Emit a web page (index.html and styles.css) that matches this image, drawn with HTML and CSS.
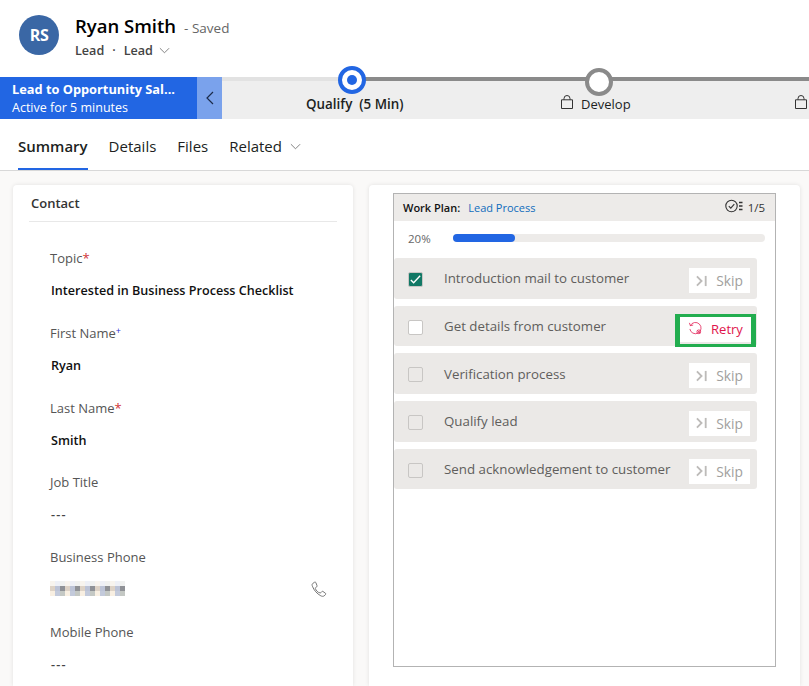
FILE: index.html
```html
<!DOCTYPE html>
<html>
<head>
	<title>Ryan Smith - Saved</title>
	<meta charset="UTF-8">
	<link rel="stylesheet" href="styles.css">
</head>
<body>
	<header class="record-head">
		<div class="avatar">RS</div>
		<div class="record-title">
			<div class="name-row"><span class="name">Ryan Smith</span><span class="saved">- Saved</span></div>
			<div class="type-row">
				<span>Lead</span><span class="dot">·</span><span>Lead</span>
				<svg class="chev" viewBox="0 0 12 12"><path d="M1 3.5l5 5 5-5"/></svg>
			</div>
		</div>
	</header>

	<section class="process">
		<div class="process-flag">
			<div class="flag-title">Lead to Opportunity Sal...</div>
			<div class="flag-sub">Active for 5 minutes</div>
		</div>
		<div class="process-toggle">
			<svg viewBox="0 0 10 14"><path d="M8 1L2 7l6 6"/></svg>
		</div>
		<div class="stages">
			<div class="stage-line"></div>
			<span class="stage-dot active"></span>
			<span class="stage-dot next"></span>
			<div class="stage stage-qualify"><b>Qualify</b>&nbsp; <b>(5 Min)</b></div>
			<div class="stage stage-develop">
				<svg class="lock" viewBox="0 0 12 14"><path d="M.5 4.800h11v8.700H.5zM3 4.800V3.500a3 3 0 0 1 6 0v1.300"/></svg>
				<span>Develop</span>
			</div>
			<div class="stage stage-last">
				<svg class="lock" viewBox="0 0 12 14"><path d="M.5 4.800h11v8.700H.5zM3 4.800V3.500a3 3 0 0 1 6 0v1.300"/></svg>
			</div>
		</div>
	</section>

	<nav class="tabs">
		<a class="tab current">Summary</a>
		<a class="tab">Details</a>
		<a class="tab">Files</a>
		<a class="tab">Related
			<svg class="chev" viewBox="0 0 12 12"><path d="M1 3.500l5 5 5-5"/></svg>
		</a>
	</nav>

	<main class="content">
		<section class="card contact">
			<h2 class="card-title">Contact</h2>
			<div class="field">
				<div class="field-label">Topic<span class="req">*</span></div>
				<div class="field-value">Interested in Business Process Checklist</div>
			</div>
			<div class="field">
				<div class="field-label">First Name<span class="rec">+</span></div>
				<div class="field-value">Ryan</div>
			</div>
			<div class="field">
				<div class="field-label">Last Name<span class="req">*</span></div>
				<div class="field-value">Smith</div>
			</div>
			<div class="field">
				<div class="field-label">Job Title</div>
				<div class="field-value empty">---</div>
			</div>
			<div class="field">
				<div class="field-label">Business Phone</div>
				<div class="field-value phone">
					<svg class="mosaic" viewBox="0 0 15 3" shape-rendering="crispEdges">
						<defs>
							<pattern id="blur" width="3" height="3" patternUnits="userSpaceOnUse">
								<rect x="0" y="0" width="1" height="1" fill="#f8f4ee"/>
								<rect x="1" y="0" width="1" height="1" fill="#eef0f6"/>
								<rect x="2" y="0" width="1" height="1" fill="#f0f1f0"/>
								<rect x="0" y="1" width="1" height="1" fill="#ddd2c6"/>
								<rect x="1" y="1" width="1" height="1" fill="#bcc3d6"/>
								<rect x="2" y="1" width="1" height="1" fill="#8f9196"/>
								<rect x="0" y="2" width="1" height="1" fill="#f8efe2"/>
								<rect x="1" y="2" width="1" height="1" fill="#c3cadb"/>
								<rect x="2" y="2" width="1" height="1" fill="#c4c8c4"/>
							</pattern>
						</defs>
						<rect width="15" height="3" fill="url(#blur)"/>
					</svg>
					<svg class="phone-icon" viewBox="0 0 16 16"><path d="M3.600 1.200L1.600 2.600C.9 3.200 1 4.200 1.400 5.200c1.600 4.200 4.600 7.600 8.400 9.600 1.200.6 2.400.8 3.300.1l1.400-1.300c.4-.4.4-1 0-1.300l-2.500-1.800c-.4-.3-.9-.2-1.200.1l-.8 1c-.3.3-.7.4-1.100.2C6.700 11.600 5 9.400 4.300 7.500c-.1-.4 0-.8.4-1l1-.7c.4-.3.5-.8.3-1.200L4.800 1.500c-.3-.5-.8-.6-1.200-.3z"/></svg>
				</div>
			</div>
			<div class="field">
				<div class="field-label">Mobile Phone</div>
				<div class="field-value empty">---</div>
			</div>
		</section>

		<section class="card plan-card">
			<div class="plan">
				<div class="plan-head">
					<span class="plan-name">Work Plan:</span>
					<a class="plan-link">Lead Process</a>
					<span class="plan-count">
						<svg viewBox="0 0 18 14"><circle cx="6.500" cy="7" r="5.700"/><path d="M3.800 7.200l2 2 3.500-4"/><path class="ticks" d="M14 3.500h3.500M14 7h3.500M14 10.500h3.500"/></svg>
						1/5
					</span>
				</div>
				<div class="plan-progress">
					<span class="pct">20%</span>
					<div class="track"><div class="fill" style="width:20%"></div></div>
				</div>
				<div class="tasks">
					<div class="task">
						<span class="check done"><svg viewBox="0 0 14 14"><path d="M2 7.500l3 3 7-7.500"/></svg></span>
						<span class="task-name">Introduction mail to customer</span>
						<button class="action skip"><svg viewBox="0 0 13 12"><path d="M1 1l5 5-5 5"/><path d="M10.500 .5v11"/></svg>Skip</button>
					</div>
					<div class="task">
						<span class="check open"></span>
						<span class="task-name">Get details from customer</span>
						<button class="action retry"><svg viewBox="0 0 16 16"><path d="M2.500 5A6 6 0 1 1 2 8.500M1.500 2l1 3 3-.7"/><circle cx="11.500" cy="11.500" r="2"/><path d="M10 10l3 3"/></svg>Retry</button>
					</div>
					<div class="task">
						<span class="check"></span>
						<span class="task-name">Verification process</span>
						<button class="action skip"><svg viewBox="0 0 13 12"><path d="M1 1l5 5-5 5"/><path d="M10.500 .5v11"/></svg>Skip</button>
					</div>
					<div class="task">
						<span class="check"></span>
						<span class="task-name">Qualify lead</span>
						<button class="action skip"><svg viewBox="0 0 13 12"><path d="M1 1l5 5-5 5"/><path d="M10.500 .5v11"/></svg>Skip</button>
					</div>
					<div class="task">
						<span class="check"></span>
						<span class="task-name">Send acknowledgement to customer</span>
						<button class="action skip"><svg viewBox="0 0 13 12"><path d="M1 1l5 5-5 5"/><path d="M10.500 .5v11"/></svg>Skip</button>
					</div>
				</div>
			</div>
		</section>
	</main>
</body>
</html>
```

FILE: styles.css
```css
html, body {
	height: 100%;
}
body {
	margin: 0;
	height: 686px;
	overflow: hidden;
	display: flex;
	flex-direction: column;
	background-color: #fff;
	color: #201f1e;
	font-family: "Open Sans", "Noto Sans", sans-serif;
	font-size: 13px;
}
svg {
	display: block;
	fill: none;
	stroke: currentColor;
}

/* record header */
.record-head {
	height: 77px;
	box-sizing: border-box;
	padding: 15px 0 0 19px;
	display: flex;
	gap: 16px;
}
.avatar {
	width: 40px;
	height: 40px;
	border-radius: 50%;
	background-color: #3a67a5;
	color: #fff;
	font-weight: 700;
	font-size: 16px;
	letter-spacing: -0.5px;
	display: flex;
	align-items: center;
	justify-content: center;
}
.record-title {
	margin-top: -1.500px;
}
.name-row {
	display: flex;
	align-items: baseline;
	gap: 8px;
	height: 24px;
	line-height: 24px;
}
.name {
	font-size: 18.500px;
	font-weight: 600;
	color: #000;
}
.saved {
	font-size: 13.500px;
	color: #666;
}
.type-row {
	display: flex;
	align-items: center;
	height: 22px;
	margin-top: 2px;
	font-size: 12.600px;
	font-weight: 600;
	color: #444;
}
.type-row .dot {
	margin: 0 8px;
}
.type-row .chev {
	margin-left: 6px;
}
.chev {
	width: 11px;
	height: 11px;
	color: #777;
	stroke-width: 1;
}

/* process bar */
.process {
	height: 42px;
	display: flex;
}
.process-flag {
	width: 197px;
	box-sizing: border-box;
	padding: 2px 0 0 12px;
	background-color: #2266e3;
	color: #fff;
	white-space: nowrap;
}
.flag-title {
	font-size: 12.800px;
	font-weight: 700;
	line-height: 20px;
}
.flag-sub {
	font-size: 12.500px;
	line-height: 18px;
}
.process-toggle {
	width: 25px;
	background-color: #7aa2ec;
	display: flex;
	align-items: center;
	justify-content: center;
	color: #1c2b4a;
}
.process-toggle svg {
	width: 10px;
	height: 14px;
	stroke-width: 1.200;
}
.stages {
	position: relative;
	flex: 1;
	background-color: #eee;
}
.stage-line {
	position: absolute;
	left: 0;
	right: 0;
	top: 0;
	height: 4px;
	background: linear-gradient(to right, #e2e2e2 130px, #8a8a8a 130px);
}
.stage-dot {
	position: absolute;
	box-sizing: border-box;
	width: 28px;
	height: 28px;
	border-radius: 50%;
	background-color: #fff;
}
.stage-dot.active {
	left: 116px;
	top: -11px;
	border: 4px solid #2266e3;
}
.stage-dot.active::after {
	content: "";
	position: absolute;
	left: 5px;
	top: 5px;
	width: 10px;
	height: 10px;
	border-radius: 50%;
	background-color: #2266e3;
}
.stage-dot.next {
	left: 363px;
	top: -9px;
	border: 4px solid #8a8a8a;
}
.stage {
	position: absolute;
	top: 18px;
	display: flex;
	align-items: center;
	height: 18px;
	color: #201f1e;
	white-space: pre;
}
.stage b {
	font-weight: 600;
}
.stage-qualify {
	left: 84px;
	font-size: 13.400px;
}
.stage-develop {
	left: 339px;
	gap: 8px;
	font-size: 13px;
}
.stage-last {
	left: 573px;
}
.lock {
	width: 12px;
	height: 14px;
	margin-top: -4px;
	color: #333;
}

/* tabs */
.tabs {
	height: 51px;
	padding-left: 18px;
	display: flex;
	gap: 21px;
	border-bottom: 1px solid #d8d8d8;
}
.tab {
	display: flex;
	align-items: center;
	gap: 8px;
	height: 51px;
	box-sizing: border-box;
	padding-top: 3px;
	font-size: 15px;
	color: #201f1e;
}
.tab.current {
	font-weight: 600;
	padding-top: 5px;
	border-bottom: 2px solid #2266e3;
}

/* cards */
.content {
	flex: 1;
	min-height: 0;
	background-color: #faf9f8;
	display: flex;
	gap: 16px;
	padding: 14px 9px 0 13px;
}
.card {
	background-color: #fff;
	border-radius: 4px 4px 0 0;
	box-shadow: 0 0 4px rgba(0, 0, 0, 0.1);
}
.contact {
	width: 340px;
	box-sizing: border-box;
	padding: 0 16px;
}
.card-title {
	margin: 0 0 24px;
	height: 36px;
	line-height: 37px;
	padding-left: 2px;
	font-size: 13px;
	font-weight: 600;
	color: #333;
	border-bottom: 1px solid #e8e8e8;
}
.field {
	height: 74.800px;
	padding-left: 21px;
	padding-right: 10px;
}
.field-label {
	height: 24px;
	line-height: 24px;
	font-size: 13px;
	color: #555;
}
.req {
	color: #d13438;
}
.rec {
	color: #2a2ad0;
	font-size: 9px;
	line-height: 0;
	vertical-align: 4px;
}
.field-value {
	margin-top: 9px;
	height: 24px;
	line-height: 24px;
	padding-left: 1px;
	font-size: 12.600px;
	font-weight: 600;
	color: #111;
}
.field-value.empty {
	color: #444;
	letter-spacing: 1.200px;
}
.phone {
	padding-left: 0;
	display: flex;
	align-items: center;
	justify-content: space-between;
}
.mosaic {
	width: 75px;
	height: 15px;
	stroke: none;
	margin-top: -4px;
}
.phone-icon {
	width: 16px;
	height: 16px;
	margin-top: -2px;
	color: #777;
}

/* work plan */
.plan-card {
	flex: 1;
	padding: 8px 24px 0;
}
.plan {
	height: 474px;
	border: 1px solid #b3b3b3;
	box-sizing: border-box;
}
.plan-head {
	height: 27px;
	display: flex;
	align-items: center;
	padding: 0 10px 0 9px;
	background-color: #edebe9;
	font-size: 11px;
}
.plan-name {
	font-weight: 600;
	color: #111;
}
.plan-link {
	margin-left: 8px;
	color: #0f6cbd;
}
.plan-count {
	margin-left: auto;
	display: flex;
	align-items: center;
	gap: 5px;
	font-size: 11.500px;
	color: #333;
}
.plan-count svg {
	width: 18px;
	height: 14px;
	stroke-width: 1.100;
	margin-top: -3px;
}
.plan-count .ticks {
	stroke-width: 1.500;
}
.plan-progress {
	display: flex;
	align-items: center;
	height: 8px;
	margin: 13px 10px 16px 14px;
}
.pct {
	width: 45px;
	font-size: 11.500px;
	color: #666;
}
.track {
	flex: 1;
	height: 8px;
	border-radius: 4px;
	background-color: #edebe9;
}
.fill {
	height: 8px;
	border-radius: 4px;
	background-color: #2266e3;
}
.tasks {
	width: 363px;
	display: flex;
	flex-direction: column;
	gap: 7px;
}
.task {
	height: 40.670px;
	box-sizing: border-box;
	padding: 0 7px 0 14px;
	display: flex;
	border-radius: 3px;
	background-color: #ebe9e7;
}
.check {
	width: 15px;
	height: 15px;
	box-sizing: border-box;
	margin-top: 14px;
	border: 1px solid #c8c6c4;
	border-radius: 2px;
}
.check.open {
	background-color: #fff;
}
.check.done {
	background-color: #117865;
	color: #fff;
}
.check svg {
	width: 13px;
	height: 13px;
	stroke-width: 1.500;
}
.task-name {
	margin-left: 21px;
	margin-top: 10.400px;
	line-height: 20px;
	font-size: 13.300px;
	color: #605e5c;
	flex: 1;
	white-space: nowrap;
}
.action {
	width: 61px;
	height: 25px;
	margin-top: 10px;
	padding: 0;
	border: none;
	background-color: #fff;
	font-family: inherit;
	display: flex;
	align-items: center;
	justify-content: center;
}
.skip {
	gap: 8px;
	font-size: 13.800px;
	color: #a19f9d;
}
.skip svg {
	width: 12px;
	height: 12px;
	stroke-width: 2;
	color: #bdbbb9;
}
.retry {
	box-sizing: border-box;
	width: 81px;
	height: 33px;
	margin-top: 8px;
	margin-right: -6px;
	padding-bottom: 3px;
	gap: 8px;
	border-style: solid;
	border-color: #22ad4f;
	border-width: 3px 5px 3px 5px;
	box-shadow: inset 0 -2px 0 #ebe9e7;
	font-size: 13px;
	color: #e0144c;
}
.retry svg {
	width: 15px;
	height: 15px;
	stroke-width: 0.800;
}
```
